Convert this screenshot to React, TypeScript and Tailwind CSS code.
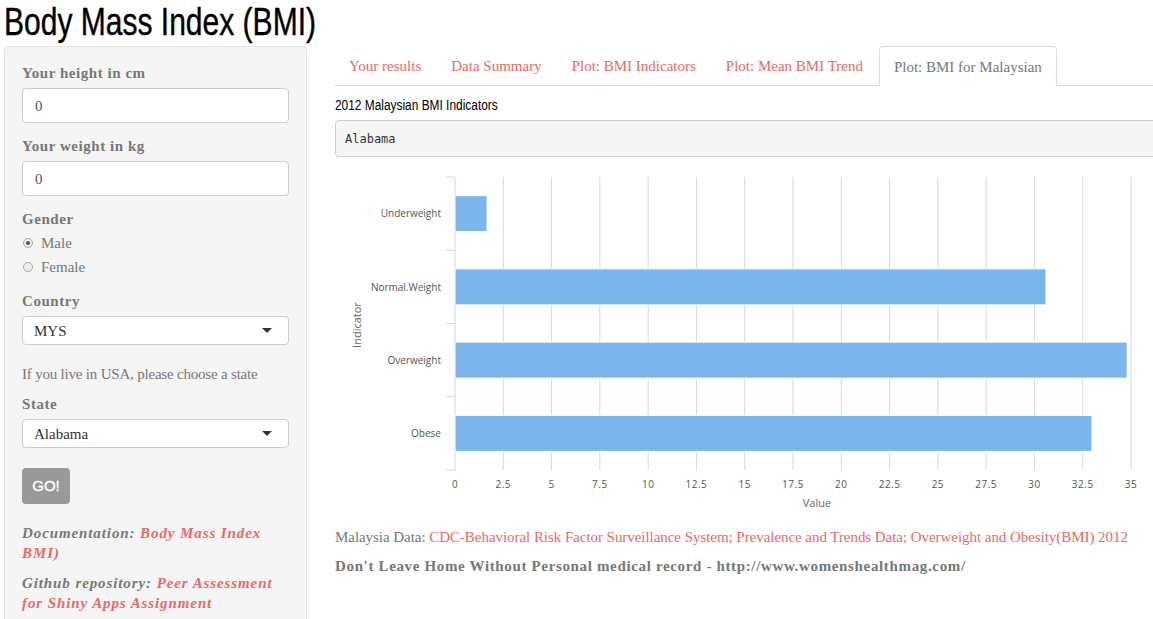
import React from "react";

const serif = "font-['Liberation_Serif',serif]";
const head = "font-['Liberation_Sans',sans-serif]";

const cats = [
  { name: "Underweight", v: 1.66 },
  { name: "Normal.Weight", v: 30.6 },
  { name: "Overweight", v: 34.8 },
  { name: "Obese", v: 32.98 },
];

function Chart() {
  const x0 = 120;
  const unit = 676 / 35;
  const yTop = 12;
  const yBot = 305;
  const band = (yBot - yTop) / 4;
  const ticks = Array.from({ length: 15 }, (_, i) => i * 2.5);
  return (
    <svg width={818} height={350} className="block">
      {ticks.map((t, i) =>
        i === 0 ? null : (
          <line key={t} x1={x0 + t * unit} x2={x0 + t * unit} y1={yTop} y2={yBot} stroke="#d8d8d8" strokeWidth={1} />
        )
      )}
      <line x1={x0} x2={x0} y1={yTop} y2={yBot} stroke="#ccd6eb" strokeWidth={1} />
      {[0, 1, 2, 3, 4].map((i) => (
        <line key={i} x1={x0 - 9} x2={x0} y1={yTop + i * band} y2={yTop + i * band} stroke="#ccd6eb" strokeWidth={1} />
      ))}
      {cats.map((c, i) => {
        const cy = yTop + band * i + band / 2;
        return (
          <g key={c.name}>
            <rect x={x0} y={cy - 18} width={c.v * unit} height={36} fill="#7cb5ec" stroke="#ffffff" strokeWidth={1} />
            <text x={106} y={cy + 1} textAnchor="end" dominantBaseline="middle" fontSize={10} fill="#555" fontFamily="'Open Sans', sans-serif">
              {c.name}
            </text>
          </g>
        );
      })}
      {ticks.map((t) => (
        <text key={t} x={x0 + t * unit} y={323} textAnchor="middle" fontSize={10} fill="#555" fontFamily="'Open Sans', sans-serif" letterSpacing={0.5}>
          {t}
        </text>
      ))}
      <text x={482} y={342} textAnchor="middle" fontSize={11} fill="#666" fontFamily="'Open Sans', sans-serif">
        Value
      </text>
      <text x={26} y={160} textAnchor="middle" fontSize={11} fill="#666" fontFamily="'Open Sans', sans-serif" transform="rotate(-90 26 160)">
        Indicator
      </text>
    </svg>
  );
}

function Select({ value }: { value: string }) {
  return (
    <div className="flex h-[29px] w-full items-center justify-between rounded-[4px] border border-[#cccccc] bg-white pl-[11px] pr-[16px] text-[15px] text-[#333]">
      <span>{value}</span>
      <span className="h-0 w-0 border-x-[5px] border-t-[5px] border-x-transparent border-t-[#333]" />
    </div>
  );
}

function Radio({ checked, label }: { checked?: boolean; label: string }) {
  return (
    <div className="flex h-[20px] items-center">
      <span className="ml-[1px] mr-[8px] flex h-[10px] w-[10px] items-center justify-center rounded-full border border-[#aaa] bg-[#eee]">
        {checked && <span className="h-[4px] w-[4px] rounded-full bg-[#555]" />}
      </span>
      <span>{label}</span>
    </div>
  );
}

export default function App() {
  const tabs = ["Your results", "Data Summary", "Plot: BMI Indicators", "Plot: Mean BMI Trend"];
  return (
    <div className={`h-[619px] w-[1153px] overflow-hidden bg-white text-[15px] leading-[20px] text-[#777777] ${serif}`}>
      <div className="h-[46px] pl-[4px]">
        <h1 className={`${head} inline-block origin-left scale-x-[0.79] pt-[1px] text-[38px] leading-[42px] text-black [-webkit-text-stroke:0.4px_black]`}>
          Body Mass Index (BMI)
        </h1>
      </div>
      <div className="flex">
        <div className="ml-[4px] w-[303px] shrink-0 rounded-[4px] border border-[#e3e3e3] bg-[#f5f5f5] px-[17px] pt-[16px] pb-[30px]">
          <div className="font-bold tracking-[0.55px]">Your height in cm</div>
          <div className="mt-[5px] flex h-[35px] items-center rounded-[4px] border border-[#cccccc] bg-white px-[12px] text-[#555]">0</div>
          <div className="mt-[13px] font-bold tracking-[0.55px]">Your weight in kg</div>
          <div className="mt-[5px] flex h-[35px] items-center rounded-[4px] border border-[#cccccc] bg-white px-[12px] text-[#555]">0</div>
          <div className="mt-[13px] font-bold tracking-[0.55px]">Gender</div>
          <div className="mt-[4px] flex flex-col gap-[4px]">
            <Radio checked label="Male" />
            <Radio label="Female" />
          </div>
          <div className="mt-[14px] font-bold tracking-[0.55px]">Country</div>
          <div className="mt-[5px]">
            <Select value="MYS" />
          </div>
          <div className="mt-[19px] tracking-[-0.2px]">If you live in USA, please choose a state</div>
          <div className="mt-[10px] font-bold tracking-[0.55px]">State</div>
          <div className="mt-[5px]">
            <Select value="Alabama" />
          </div>
          <button className={`${head} mt-[20px] flex h-[36px] w-[48px] items-center justify-center rounded-[4px] bg-[#999999] text-[15px] text-white [-webkit-text-stroke:0.3px_white]`}>
            GO!
          </button>
          <p className="mt-[19px] whitespace-nowrap font-bold italic tracking-[0.9px]">
            Documentation: <span className="text-[#eb6864]">Body Mass Index</span>
            <br />
            <span className="text-[#eb6864]">BMI)</span>
          </p>
          <p className="mt-[10px] whitespace-nowrap font-bold italic tracking-[0.9px]">
            Github repository: <span className="text-[#eb6864]">Peer Assessment</span>
            <br />
            <span className="text-[#eb6864]">for Shiny Apps Assignment</span>
          </p>
        </div>
        <div className="ml-[28px] w-[900px] shrink-0">
          <div className="flex h-[40px] border-b border-[#dddddd]">
            {tabs.map((t) => (
              <div key={t} className="mr-[2px] flex h-[39px] items-center px-[14px] text-[#eb6864]">
                {t}
              </div>
            ))}
            <div className="-mb-[1px] flex h-[40px] items-center rounded-t-[4px] border border-b-0 border-[#dddddd] bg-white px-[14px] text-[#777]">
              Plot: BMI for Malaysian
            </div>
          </div>
          <div className="mt-[9px] h-[20px]">
            <span className={`${head} inline-block origin-left scale-x-[0.85] text-[14px] leading-[20px] text-black`}>
              2012 Malaysian BMI Indicators
            </span>
          </div>
          <div className="mt-[5px] flex h-[37px] items-center rounded-[4px] border border-[#cccccc] bg-[#f5f5f5] px-[9px] font-['DejaVu_Sans_Mono',monospace] text-[12px] text-[#333]">
            Alabama
          </div>
          <div className="mt-[8px]">
            <Chart />
          </div>
          <div className="mt-[12px] tracking-[-0.05px]">
            Malaysia Data:{" "}
            <span className="text-[#eb6864]">
              CDC-Behavioral Risk Factor Surveillance System; Prevalence and Trends Data; Overweight and Obesity(BMI) 2012
            </span>
          </div>
          <div className="mt-[9px] font-bold tracking-[0.65px]">Don't Leave Home Without Personal medical record - http://www.womenshealthmag.com/</div>
        </div>
      </div>
    </div>
  );
}
